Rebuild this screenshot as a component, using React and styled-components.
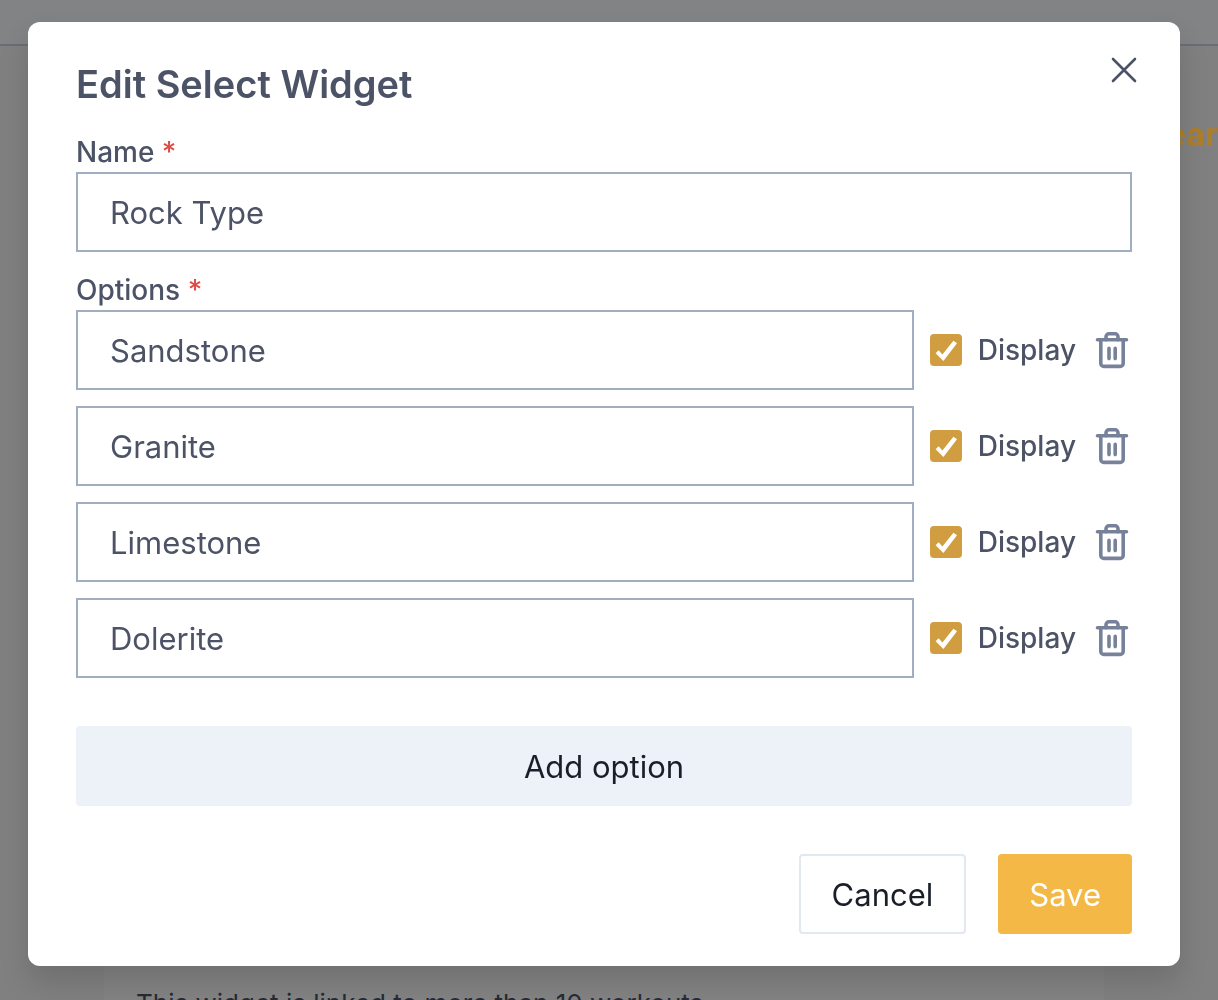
import { useState } from 'react';
import styled, { createGlobalStyle } from 'styled-components';

const GlobalStyle = createGlobalStyle`
    * {
        box-sizing: border-box;
    }

    body {
        margin: 0;
        background: #f5f5f5;
        color: #4c5366;
        font-family: Inter, 'Liberation Sans', sans-serif;
        overflow: hidden;
    }

    button,
    input {
        font-family: inherit;
    }
`;

const Page = styled.div`
    height: 100vh;
    display: flex;
    flex-direction: column;
    overflow: hidden;
`;

const TopBar = styled.header`
    flex: none;
    height: 46px;
    background: #f9fbfd;
    border-bottom: 2px solid #cbd1e0;
`;

const Main = styled.main`
    flex: 1;
    display: flex;
    flex-direction: column;
    justify-content: space-between;
    padding-top: 69px;
`;

// stays highlighted above the backdrop
const PageLink = styled.a`
    position: relative;
    z-index: 2;
    align-self: flex-end;
    color: #ae7d2a;
    font-size: 32px;
    font-weight: 700;
    line-height: 40px;
    text-decoration: none;
`;

const Notice = styled.p`
    height: 40px;
    margin: 0 114px 0 104px;
    padding: 28px 32px 0;
    background: #fbfcfd;
    font-size: 26px;
    line-height: 32px;
    white-space: nowrap;
`;

const Backdrop = styled.div`
    position: fixed;
    inset: 0;
    z-index: 1;
    background: rgba(0, 0, 0, 0.48);
`;

const ModalContainer = styled.div`
    position: fixed;
    inset: 0;
    z-index: 3;
    padding: 22px 38px 34px 28px;
`;

const Modal = styled.section`
    position: relative;
    padding: 38px 48px 32px;
    border-radius: 12px;
    background: #fff;
    box-shadow: 0 16px 30px rgba(0, 0, 0, 0.14);
`;

const Title = styled.h1`
    margin: 0 0 24px;
    font-size: 38px;
    font-weight: 600;
    line-height: 48px;
`;

const CloseButton = styled.button`
    position: absolute;
    top: 24px;
    right: 32px;
    width: 48px;
    height: 48px;
    padding: 0;
    border: 0;
    background: none;
    color: #4c5366;
    cursor: pointer;

    svg {
        display: block;
    }
`;

const Fieldset = styled.div`
    display: flex;
    flex-direction: column;
    margin-bottom: ${(props) => props.$gap}px;
`;

const Label = styled.label`
    font-size: 28px;
    font-weight: 500;
    line-height: 40px;
`;

const Required = styled.span`
    color: #e04a45;
`;

const TextInput = styled.input`
    flex: 1;
    min-width: 0;
    min-height: 80px;
    padding: 0 32px;
    border: 2px solid #a0aec0;
    border-radius: 0;
    background: #fff;
    color: #4c5366;
    font-size: 31px;
    outline: none;
`;

const OptionList = styled.div`
    display: flex;
    flex-direction: column;
    gap: 16px;
`;

const OptionRow = styled.div`
    display: flex;
    align-items: center;
    gap: 16px;
`;

const DisplayLabel = styled.label`
    display: flex;
    align-items: center;
    gap: 16px;
    font-size: 28px;
    font-weight: 500;
    line-height: 40px;
`;

const Checkbox = styled.input`
    appearance: none;
    width: 32px;
    height: 32px;
    margin: 0;
    border: 2px solid #d09e40;
    border-radius: 4px;

    &:checked {
        background: #d09e40
            url("data:image/svg+xml,%3Csvg xmlns='http://www.w3.org/2000/svg' viewBox='0 0 32 32'%3E%3Cpath d='M5.6 19.2L8.6 16.2L12.4 20.4L23.4 6.8L27 9.2L13.4 27Z' fill='white'/%3E%3C/svg%3E")
            center / 32px 32px no-repeat;
    }
`;

const IconButton = styled.button`
    width: 40px;
    height: 40px;
    padding: 0;
    border: 0;
    background: none;
    color: #77829a;
    cursor: pointer;

    svg {
        display: block;
    }
`;

const Button = styled.button`
    height: 80px;
    padding: 0 31px;
    border: 0;
    border-radius: 4px;
    font-size: 31px;
    cursor: pointer;
`;

const AddButton = styled(Button)`
    width: 100%;
    background: #edf1f8;
    color: #1a1e28;
`;

const CancelButton = styled(Button)`
    border: 2px solid #e2e8f0;
    background: #fff;
    color: #1a1e28;
`;

const SaveButton = styled(Button)`
    background: #f4b846;
    color: #fff;
`;

const Footer = styled.footer`
    display: flex;
    justify-content: flex-end;
    gap: 32px;
    margin-top: 48px;
`;

const CloseIcon = () => (
    <svg width="48" height="48" viewBox="0 0 48 48" fill="none" aria-hidden="true">
        <path
            d="M13 13L35 35M35 13L13 35"
            stroke="currentColor"
            strokeWidth="2.6"
            strokeLinecap="round"
        />
    </svg>
);

const TrashIcon = () => (
    <svg
        width="40"
        height="40"
        viewBox="0 0 40 40"
        fill="none"
        stroke="currentColor"
        strokeWidth="3.6"
        strokeLinecap="round"
        strokeLinejoin="round"
        aria-hidden="true"
    >
        <path d="M5.5 9.8H34.5" />
        <path d="M8.8 10V33.4a3 3 0 0 0 3 3h16.4a3 3 0 0 0 3-3V10" />
        <path d="M14 9.8V6.8a3 3 0 0 1 3-3h6a3 3 0 0 1 3 3v3" />
        <path d="M17 18.4V28.6M23.2 18.4V28.6" strokeWidth="3.6" />
    </svg>
);

const initialOptions = [
    { id: 1, name: 'Sandstone', display: true },
    { id: 2, name: 'Granite', display: true },
    { id: 3, name: 'Limestone', display: true },
    { id: 4, name: 'Dolerite', display: true },
];

const App = () => {
    const [name, setName] = useState('Rock Type');
    const [options, setOptions] = useState(initialOptions);

    const updateOption = (id, values) => {
        setOptions(options.map((option) => (option.id === id ? { ...option, ...values } : option)));
    };

    const handleRemove = (id) => {
        setOptions(options.filter((option) => option.id !== id));
    };

    const handleAdd = () => {
        setOptions([...options, { id: Date.now(), name: '', display: true }]);
    };

    return (
        <>
            <GlobalStyle />
            <Page>
                <TopBar />
                <Main>
                    <PageLink href="#">ear</PageLink>
                    <Notice>This widget is linked to more than 10 workouts.</Notice>
                </Main>
            </Page>
            <Backdrop />
            <ModalContainer>
                <Modal role="dialog" aria-modal="true" aria-labelledby="modal-title">
                    <Title id="modal-title">Edit Select Widget</Title>
                    <CloseButton type="button" aria-label="Close">
                        <CloseIcon />
                    </CloseButton>
                    <Fieldset $gap={18}>
                        <Label htmlFor="widget-name">
                            Name <Required>*</Required>
                        </Label>
                        <TextInput
                            id="widget-name"
                            value={name}
                            onChange={(e) => setName(e.target.value)}
                        />
                    </Fieldset>
                    <Fieldset $gap={48}>
                        <Label htmlFor="option-1">
                            Options <Required>*</Required>
                        </Label>
                        <OptionList>
                            {options.map((option) => (
                                <OptionRow key={option.id}>
                                    <TextInput
                                        id={`option-${option.id}`}
                                        aria-label="Option"
                                        value={option.name}
                                        onChange={(e) =>
                                            updateOption(option.id, { name: e.target.value })
                                        }
                                    />
                                    <DisplayLabel>
                                        <Checkbox
                                            type="checkbox"
                                            checked={option.display}
                                            onChange={(e) =>
                                                updateOption(option.id, {
                                                    display: e.target.checked,
                                                })
                                            }
                                        />
                                        Display
                                    </DisplayLabel>
                                    <IconButton
                                        type="button"
                                        aria-label="Delete option"
                                        onClick={() => handleRemove(option.id)}
                                    >
                                        <TrashIcon />
                                    </IconButton>
                                </OptionRow>
                            ))}
                        </OptionList>
                    </Fieldset>
                    <AddButton type="button" onClick={handleAdd}>
                        Add option
                    </AddButton>
                    <Footer>
                        <CancelButton type="button">Cancel</CancelButton>
                        <SaveButton type="button">Save</SaveButton>
                    </Footer>
                </Modal>
            </ModalContainer>
        </>
    );
};

export default App;
